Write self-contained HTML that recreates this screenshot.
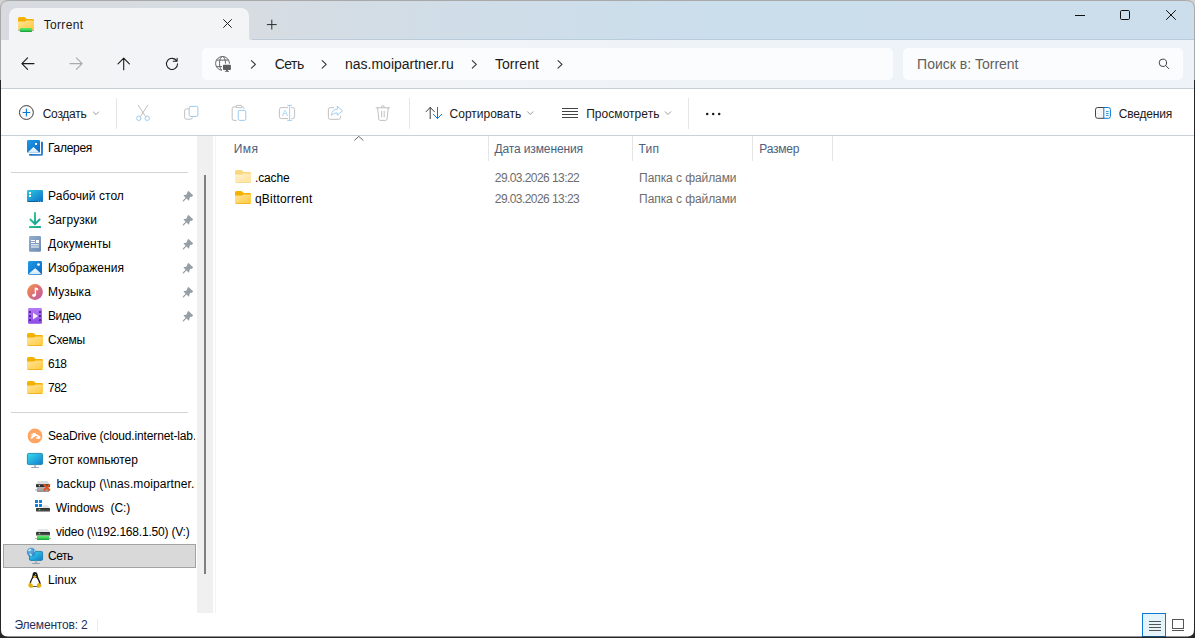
<!DOCTYPE html>
<html lang="ru"><head><meta charset="utf-8"><title>Torrent</title>
<style>
*{box-sizing:border-box;margin:0;padding:0}
html,body{width:1195px;height:638px;overflow:hidden;background:#fff}
body{font-family:"Liberation Sans","DejaVu Sans",sans-serif;font-size:12px;color:#1b1b1b;position:relative}
.a{position:absolute}
svg{position:absolute;overflow:visible}
.t{position:absolute;white-space:nowrap;line-height:16px;height:16px}
#win{position:absolute;left:0;top:0;width:1195px;height:638px;overflow:hidden;background:#fff}
#title{left:0;top:0;width:1195px;height:40px;background:linear-gradient(90deg,#d7dbdf 0%,#d6dce2 22%,#cfdde8 40%,#cbdeec 60%,#ccdeeb 100%)}
#titleline{left:252px;top:39px;width:943px;height:1px;background:rgba(110,145,175,.22)}
#nav{left:0;top:40px;width:1195px;height:48px;background:linear-gradient(90deg,#f3f4f6 0%,#f2f4f7 30%,#eef3f8 60%,#edf3f8 100%)}
#navline{left:0;top:88px;width:1195px;height:1px;background:#c6d0d9}
#tab{left:9px;top:8px;width:240px;height:33px;background:#f3f4f6;border-radius:8px 8px 0 0}
#addr{left:202px;top:48px;width:691px;height:32px;background:#fbfcfd;border-radius:5px}
#search{left:903px;top:48px;width:280px;height:32px;background:#fbfcfd;border-radius:5px}
#cmd{left:0;top:89px;width:1195px;height:46px;background:#fff}
#cmdline{left:0;top:135px;width:1195px;height:1px;background:#c9d0d8}
.vsep{position:absolute;width:1px;background:#e6e6e6}
#track{left:197px;top:136px;width:16px;height:477px;background:#f0f0f0}
#thumb{left:204px;top:175px;width:2px;height:399px;background:#7f7f7f}
.hsep{position:absolute;height:1px;background:#d4d4d4}
#sel{left:3px;top:544px;width:193px;height:24px;background:#d9d9d9;border:1px solid #a2a2a2}
.csep{position:absolute;top:136px;width:1px;height:25px;background:#e5e5e5}
#border{position:absolute;left:0;top:0;width:1195px;height:638px;pointer-events:none}
</style></head><body>
<div id="win">
<div id="title" class="a"></div>
<div id="titleline" class="a"></div>
<div id="nav" class="a"></div>
<div id="navline" class="a"></div>
<div id="tab" class="a"></div>
<div id="addr" class="a"></div>
<div id="search" class="a"></div>
<div id="cmd" class="a"></div>
<div id="cmdline" class="a"></div>
<div class="vsep" style="left:116px;top:98px;height:31px"></div>
<div class="vsep" style="left:409px;top:98px;height:31px"></div>
<div class="vsep" style="left:688px;top:98px;height:31px"></div>
<div id="track" class="a"></div>
<div id="thumb" class="a"></div>
<div class="vsep" style="left:215px;top:136px;height:477px;background:#f4f4f4"></div>
<div class="hsep" style="left:11px;top:172px;width:177px"></div>
<div class="hsep" style="left:11px;top:412px;width:177px"></div>
<div id="sel" class="a"></div>
<div class="csep" style="left:488px"></div>
<div class="csep" style="left:632px"></div>
<div class="csep" style="left:752px"></div>
<div class="csep" style="left:832px"></div>
<div class="vsep" style="left:97px;top:619px;height:12px;background:#ececec"></div>
<svg style="left:5.5px;top:36.5px" width="3.5" height="3.5" viewBox="0 0 3.5 3.5"><path d="M3.5 0V3.5H0Q3.5 3.5 3.5 0Z" fill="#f3f4f6"/></svg>
<svg style="left:249px;top:36.5px" width="3.5" height="3.5" viewBox="0 0 3.5 3.5"><path d="M0 0V3.5H3.5Q0 3.5 0 0Z" fill="#f3f4f6"/></svg>
<svg style="left:0;top:0" width="1195" height="638" viewBox="0 0 1195 638"><g transform="translate(18 17)" opacity="1"><path d="M0 1.5Q0 0 1.5 0H6Q6.9 0 7.5 .7L8.6 2.1H14.6Q16 2.1 16 3.5V8H0Z" fill="url(#fB)"/><path d="M0 4.4H6.4Q7.2 4.4 7.8 3.9L8.2 3.6H15Q16 3.6 16 4.6V11.6Q16 13 14.6 13H1.4Q0 13 0 11.6Z" fill="url(#fF)"/><path d="M.3 12.3Q.7 13 1.4 13H14.6Q15.3 13 15.7 12.3Z" fill="#eaa900" opacity=".8"/></g><rect x="18" y="30" width="16" height="1" fill="#9a9a9a" opacity=".7"/><rect x="20" y="28" width="12" height="3.9" rx=".6" fill="url(#grn)"/></svg>
<svg style="left:223px;top:19px" width="9" height="9" viewBox="0 0 9 9"><path d="M0.3 0.3L8.7 8.7M8.7 0.3L0.3 8.7" stroke="#222" stroke-width="1" fill="none"/></svg>
<svg style="left:0;top:0" width="300" height="40" viewBox="0 0 300 40"><path d="M271.8 19.7V29.5M266.9 24.6H276.7" stroke="#222" stroke-width="0.95" fill="none"/></svg>
<div class="a" style="left:1075px;top:15px;width:10px;height:1px;background:#111"></div>
<svg style="left:1120px;top:10px" width="10" height="10" viewBox="0 0 10 10"><rect x=".5" y=".5" width="9" height="9" rx="1.2" stroke="#111" stroke-width="1" fill="none"/></svg>
<svg style="left:1166px;top:10px" width="10" height="10" viewBox="0 0 10 10"><path d="M0.2 0.2L9.8 9.8M9.8 0.2L0.2 9.8" stroke="#111" stroke-width="1" fill="none"/></svg>
<svg style="left:0;top:0" width="1195" height="638" viewBox="0 0 1195 638"><path d="M34 63.6H22M27.6 57.9L21.9 63.6L27.6 69.3" stroke="#1a1a1a" stroke-width="1.1" fill="none" stroke-linecap="round" stroke-linejoin="round" /><path d="M70 63.6H82M76.4 57.9L82.1 63.6L76.4 69.3" stroke="#a9a9a9" stroke-width="1.1" fill="none" stroke-linecap="round" stroke-linejoin="round" /><path d="M123.7 69.8V58.4M118 63.9L123.7 58.2L129.4 63.9" stroke="#1a1a1a" stroke-width="1.1" fill="none" stroke-linecap="round" stroke-linejoin="round" /><path d="M177.55 63.80A5.55 5.55 0 1 1 176.76 61.04M173.3 61.2H177.1V58.2" stroke="#1a1a1a" stroke-width="1.05" fill="none" stroke-linecap="round" stroke-linejoin="round" /><clipPath id="gc"><path d="M210 50H240V80H210Z M221.9 63.7H232V73H221.9Z" clip-rule="evenodd"/></clipPath><g clip-path="url(#gc)" stroke="#666" stroke-width="1" fill="none"><circle cx="222.5" cy="63.4" r="6.9"/><ellipse cx="222.5" cy="63.4" rx="3" ry="6.9"/><path d="M216.4 60.1H228.6M216.4 66.6H228.6"/></g><path d="M223 65.5Q223 64.8 223.7 64.8H230.2Q230.9 64.8 230.9 65.5V69.2Q230.9 69.9 230.2 69.9H223.7Q223 69.9 223 69.2ZM226.2 69.9H227.7L228.2 70.9H229V71.7H224.9V70.9H225.7Z" fill="#5c5c5c"/><path d="M251.4 60.6L255.4 64.4L251.4 68.2" stroke="#333" stroke-width="1.1" fill="none" stroke-linecap="round" stroke-linejoin="round" /><path d="M322.2 60.6L326.2 64.4L322.2 68.2" stroke="#333" stroke-width="1.1" fill="none" stroke-linecap="round" stroke-linejoin="round" /><path d="M472.3 60.6L476.3 64.4L472.3 68.2" stroke="#333" stroke-width="1.1" fill="none" stroke-linecap="round" stroke-linejoin="round" /><path d="M558 60.6L562 64.4L558 68.2" stroke="#333" stroke-width="1.1" fill="none" stroke-linecap="round" stroke-linejoin="round" /><path d="M1166.6 62.8A3.7 3.7 0 1 1 1159.2 62.8A3.7 3.7 0 1 1 1166.6 62.8M1165.6 65.5L1168.8 68.7" stroke="#444" stroke-width="1.0" fill="none" stroke-linecap="round" stroke-linejoin="round" /></svg>
<svg style="left:0;top:0" width="1195" height="638" viewBox="0 0 1195 638"><circle cx="26.4" cy="112.5" r="6.95" fill="#fafafa" stroke="#3c3c3c" stroke-width="1"/><path d="M23 112.5H29.8M26.4 109.1V115.9" stroke="#0a78d4" stroke-width="1.1" fill="none" stroke-linecap="round" stroke-linejoin="round" /><path d="M93.4 112L96.0 114.6L98.6 112" stroke="#8a8a8a" stroke-width="0.9" fill="none" stroke-linecap="round" stroke-linejoin="round" /><path d="M527.6 111.8L530.25 114.5L532.9 111.8" stroke="#8a8a8a" stroke-width="0.9" fill="none" stroke-linecap="round" stroke-linejoin="round" /><path d="M665.2 111.8L667.9000000000001 114.5L670.6 111.8" stroke="#8a8a8a" stroke-width="0.9" fill="none" stroke-linecap="round" stroke-linejoin="round" /><path d="M138.3 105.3L145.5 116.4M147.7 105.3L140.5 116.4" stroke="#b9b9b9" stroke-width="0.9" fill="none" stroke-linecap="round" stroke-linejoin="round" /><circle cx="138.8" cy="118.3" r="2.2" fill="none" stroke="#9ccbf1" stroke-width="1"/><circle cx="147.2" cy="118.3" r="2.2" fill="none" stroke="#9ccbf1" stroke-width="1"/><path d="M188.4 108.9H186.6Q184.6 108.9 184.6 110.9V117.2Q184.6 119.2 186.6 119.2H190.6Q192.2 119.2 192.4 117.9" stroke="#b9b9b9" stroke-width="0.9" fill="none" stroke-linecap="round" stroke-linejoin="round" /><rect x="189.2" y="106.3" width="8.7" height="10.2" rx="1.8" fill="none" stroke="#9ccbf1" stroke-width="1"/><path d="M236.2 106.9H233.8Q232.2 106.9 232.2 108.5V118.8Q232.2 120.4 233.8 120.4H236.3M241.8 106.9H242.5Q244 106.9 244 108.4" stroke="#b9b9b9" stroke-width="0.9" fill="none" stroke-linecap="round" stroke-linejoin="round" /><rect x="236" y="105.4" width="6" height="2.2" rx="1.1" fill="none" stroke="#b9b9b9" stroke-width="0.9"/><rect x="238.2" y="110.3" width="7.6" height="10.1" rx="1.6" fill="none" stroke="#9ccbf1" stroke-width="1"/><path d="M287.6 107.6H281.4Q279.4 107.6 279.4 109.6V116.6Q279.4 118.6 281.4 118.6H287.6M291.6 107.6H292.6Q294.6 107.6 294.6 109.6V116.6Q294.6 118.6 292.6 118.6H291.6" stroke="#b9b9b9" stroke-width="0.9" fill="none" stroke-linecap="round" stroke-linejoin="round" /><path d="M289.6 105.4V120.4M287.6 105.4H291.6M287.6 120.4H291.6" stroke="#9ccbf1" stroke-width="0.9" fill="none" stroke-linecap="round" stroke-linejoin="round" /><text x="284.9" y="115.8" font-family="Liberation Sans,sans-serif" font-size="8.6" fill="#9ccbf1" text-anchor="middle">A</text><path d="M333.5 107.6H330.3Q328.4 107.6 328.4 109.5V117.4Q328.4 119.3 330.3 119.3H338.6Q340.5 119.3 340.5 117.4V116.2" stroke="#b9b9b9" stroke-width="0.9" fill="none" stroke-linecap="round" stroke-linejoin="round" /><path d="M337.3 106.4L342.5 110.8L337.3 115.3V112.9Q333.4 112.7 331.2 115.4Q332 109.4 337.3 108.9Z" stroke="#9ccbf1" stroke-width="0.9" fill="none" stroke-linecap="round" stroke-linejoin="round" /><path d="M376.2 107.8H389.6M381.4 107.6Q381.4 105.6 382.9 105.6Q384.4 105.6 384.4 107.6M377.6 108L378.8 119.2Q379 120.4 380.2 120.4H385.6Q386.8 120.4 387 119.2L388.2 108M381.6 111.2V117M384.2 111.2V117" stroke="#b9b9b9" stroke-width="0.9" fill="none" stroke-linecap="round" stroke-linejoin="round" /><path d="M430.2 118.6V107.5M426.2 111.6L430.2 107.4L434.3 111.6" stroke="#3a3a3a" stroke-width="1.0" fill="none" stroke-linecap="round" stroke-linejoin="round" /><path d="M437.5 107.4V118.5M433.4 114.3L437.5 118.6L441.6 114.3" stroke="#0a78d4" stroke-width="1.0" fill="none" stroke-linecap="round" stroke-linejoin="round" /><rect x="562" y="108.0" width="16" height="1" fill="#444"/><rect x="562" y="111.0" width="16" height="1" fill="#444"/><rect x="562" y="114.0" width="16" height="1" fill="#444"/><rect x="562" y="117.0" width="16" height="1" fill="#444"/><circle cx="707.2" cy="113.9" r="1.25" fill="#1a1a1a"/><circle cx="713.2" cy="113.9" r="1.25" fill="#1a1a1a"/><circle cx="719.2" cy="113.9" r="1.25" fill="#1a1a1a"/><path d="M1104.2 107.5H1097.6Q1095.5 107.5 1095.5 109.6V116.2Q1095.5 118.3 1097.6 118.3H1104.2" fill="#f6f6f6" stroke="#444" stroke-width="1"/><path d="M1104.2 107.5H1108.3Q1110.4 107.5 1110.4 109.6V116.2Q1110.4 118.3 1108.3 118.3H1104.2Z" stroke="#0a78d4" stroke-width="1.0" fill="none" stroke-linecap="round" stroke-linejoin="round" /><path d="M1106 111.4H1108.6M1106 113.4H1108.6M1106 115.4H1108.6" stroke="#0a78d4" stroke-width=".85" fill="none"/></svg>
<svg style="left:0;top:0" width="1195" height="638" viewBox="0 0 1195 638"><defs>
<linearGradient id="fB" x1="0" y1="0" x2="0" y2="1"><stop offset="0" stop-color="#f7b500"/><stop offset="1" stop-color="#eea700"/></linearGradient>
<linearGradient id="fF" x1="0" y1="0" x2="1" y2="1"><stop offset="0" stop-color="#ffe59a"/><stop offset="1" stop-color="#ffc73a"/></linearGradient>
<linearGradient id="blu" x1="0" y1="0" x2="1" y2="1"><stop offset="0" stop-color="#1f9be6"/><stop offset="1" stop-color="#0a68c4"/></linearGradient>
<linearGradient id="blu2" x1="0" y1="0" x2="1" y2="1"><stop offset="0" stop-color="#0a5cbe"/><stop offset="1" stop-color="#3f8ad6"/></linearGradient>
<linearGradient id="mtn" x1="0" y1="0" x2="0" y2="1"><stop offset="0" stop-color="#ffffff"/><stop offset="1" stop-color="#cfe6fa"/></linearGradient>
<linearGradient id="dsk" x1="0" y1="0" x2="1" y2="1"><stop offset="0" stop-color="#30c8de"/><stop offset="1" stop-color="#0a6ecb"/></linearGradient>
<linearGradient id="mon" x1="0" y1="0" x2="1" y2="1"><stop offset="0" stop-color="#3adcea"/><stop offset="1" stop-color="#107cd0"/></linearGradient>
<linearGradient id="dl" x1="0" y1="0" x2="1" y2="1"><stop offset="0" stop-color="#30d07a"/><stop offset="1" stop-color="#1298a4"/></linearGradient>
<linearGradient id="doc" x1="0" y1="0" x2="1" y2="1"><stop offset="0" stop-color="#93aecd"/><stop offset="1" stop-color="#6b8db4"/></linearGradient>
<linearGradient id="mus" x1="0" y1="0" x2="1" y2="1"><stop offset="0" stop-color="#f6934a"/><stop offset=".55" stop-color="#dc6c78"/><stop offset="1" stop-color="#b458b8"/></linearGradient>
<linearGradient id="vid" x1="0" y1="0" x2="0" y2="1"><stop offset="0" stop-color="#b77af4"/><stop offset="1" stop-color="#8c4ae6"/></linearGradient>
<linearGradient id="grn" x1="0" y1="0" x2="0" y2="1"><stop offset="0" stop-color="#62ec70"/><stop offset=".55" stop-color="#3fd255"/><stop offset="1" stop-color="#14963a"/></linearGradient>
<linearGradient id="drv" x1="0" y1="0" x2="0" y2="1"><stop offset="0" stop-color="#2a2a2a"/><stop offset=".7" stop-color="#4a4a4a"/><stop offset="1" stop-color="#8a8a8a"/></linearGradient>
<radialGradient id="glb" cx=".4" cy=".35" r=".7"><stop offset="0" stop-color="#6ab8e8"/><stop offset="1" stop-color="#2a7fc0"/></radialGradient>
</defs><path d="M41 141.8H42Q43 141.8 43 142.8V154.2Q43 155.7 41.5 155.7H30Q29 155.7 29 154.7V154H41Z" fill="url(#blu2)"/><rect x="27" y="140" width="13" height="12.8" rx="1.2" fill="url(#blu)"/><rect x="35" y="143" width="2" height="2" fill="#fff"/><path d="M33.5 147L39.4 152.5Q39.2 152.8 38.8 152.8H28.2Q27.8 152.8 27.6 152.5Z" fill="url(#mtn)"/><rect x="27" y="190" width="16" height="12" rx="1.3" fill="url(#dsk)"/><path d="M27.3 201.2H42.7Q42.5 202 41.7 202H28.3Q27.5 202 27.3 201.2Z" fill="#0b4f8c"/><rect x="29" y="192" width="2" height="2" fill="#fff"/><rect x="29" y="195" width="2" height="2" fill="#fff"/><rect x="38" y="201.2" width="1" height=".8" fill="#7fc4ee"/><rect x="40" y="201.2" width="1" height=".8" fill="#7fc4ee"/><path d="M35 213V224.2M30.4 219.5L35 224.2L39.6 219.5" stroke="url(#dl)" stroke-width="1.9" fill="none" stroke-linecap="round" stroke-linejoin="round"/><rect x="29" y="226" width="12" height="1.9" rx=".4" fill="url(#dl)"/><rect x="29" y="236" width="12" height="15.8" rx="1.2" fill="url(#doc)"/><rect x="31" y="240" width="4" height="1" fill="#fff"/><rect x="31" y="242" width="4" height="1" fill="#fff"/><rect x="36" y="240" width="3" height="3" fill="#fff"/><rect x="31" y="244.3" width="8" height="1" fill="#fff"/><rect x="31" y="246.5" width="8" height="1" fill="#fff"/><rect x="28" y="261" width="14" height="13.8" rx="1.4" fill="url(#blu)"/><circle cx="38.5" cy="264.6" r="1.35" fill="#fff"/><path d="M35.2 268.3L41 273.6Q40.8 273.9 40.4 273.9H29.6Q29.2 273.9 29 273.6Z" fill="url(#mtn)"/><circle cx="35" cy="292" r="7.9" fill="url(#mus)"/><ellipse cx="33.9" cy="295.3" rx="1.8" ry="1.6" fill="#fff"/><path d="M34.7 295.3V287.6Q35.6 287.2 37.6 288.2Q38.3 288.6 38.2 289.4V290.8Q37 289.8 36.1 289.8V295.3Z" fill="#fff"/><rect x="28" y="308" width="14" height="15.8" rx="1.4" fill="url(#vid)"/><rect x="29.1" y="311.1" width="1.9" height="1.9" rx=".3" fill="#47297e"/><rect x="39" y="311.1" width="1.9" height="1.9" rx=".3" fill="#47297e"/><rect x="29.1" y="315.1" width="1.9" height="1.9" rx=".3" fill="#47297e"/><rect x="39" y="315.1" width="1.9" height="1.9" rx=".3" fill="#47297e"/><rect x="29.1" y="319.1" width="1.9" height="1.9" rx=".3" fill="#47297e"/><rect x="39" y="319.1" width="1.9" height="1.9" rx=".3" fill="#47297e"/><path d="M33 312.8L38.2 316L33 319.4Z" fill="#f4f0fa"/><g transform="translate(27 333)" opacity="1"><path d="M0 1.5Q0 0 1.5 0H6Q6.9 0 7.5 .7L8.6 2.1H14.6Q16 2.1 16 3.5V8H0Z" fill="url(#fB)"/><path d="M0 4.4H6.4Q7.2 4.4 7.8 3.9L8.2 3.6H15Q16 3.6 16 4.6V11.6Q16 13 14.6 13H1.4Q0 13 0 11.6Z" fill="url(#fF)"/><path d="M.3 12.3Q.7 13 1.4 13H14.6Q15.3 13 15.7 12.3Z" fill="#eaa900" opacity=".8"/></g><g transform="translate(27 357)" opacity="1"><path d="M0 1.5Q0 0 1.5 0H6Q6.9 0 7.5 .7L8.6 2.1H14.6Q16 2.1 16 3.5V8H0Z" fill="url(#fB)"/><path d="M0 4.4H6.4Q7.2 4.4 7.8 3.9L8.2 3.6H15Q16 3.6 16 4.6V11.6Q16 13 14.6 13H1.4Q0 13 0 11.6Z" fill="url(#fF)"/><path d="M.3 12.3Q.7 13 1.4 13H14.6Q15.3 13 15.7 12.3Z" fill="#eaa900" opacity=".8"/></g><g transform="translate(27 381)" opacity="1"><path d="M0 1.5Q0 0 1.5 0H6Q6.9 0 7.5 .7L8.6 2.1H14.6Q16 2.1 16 3.5V8H0Z" fill="url(#fB)"/><path d="M0 4.4H6.4Q7.2 4.4 7.8 3.9L8.2 3.6H15Q16 3.6 16 4.6V11.6Q16 13 14.6 13H1.4Q0 13 0 11.6Z" fill="url(#fF)"/><path d="M.3 12.3Q.7 13 1.4 13H14.6Q15.3 13 15.7 12.3Z" fill="#eaa900" opacity=".8"/></g><circle cx="35" cy="435.9" r="7.4" fill="#ffa563"/><path d="M30.2 435.2Q31.2 434.3 32.4 434.2Q33.2 432.6 34.6 432.9Q36 433.2 36.6 434.4Q38.4 434.3 39.4 436Q40.6 436.4 40.5 437.6Q40.4 438.8 39.2 438.8H36.3Q35.6 438.2 36.2 437.4Q36.9 436.6 37.8 437.2Q37.4 435.8 36.2 435.9Q35 436 33.6 437.6Q32.6 438.8 31.4 438.7Q30.4 438.5 30.6 437.5Q31.4 436.4 32.6 435.6Q31.4 435 30.2 435.2Z" fill="#fff"/><rect x="27.4" y="453.4" width="15.2" height="11.2" rx="1.3" fill="url(#mon)" stroke="#0c7aa4" stroke-width=".8"/><rect x="34.2" y="464.8" width="1.6" height="2.4" fill="#a3afbb"/><rect x="31" y="467" width="8" height="1" rx=".4" fill="#9aa6b4"/><path d="M38.2 481H47.6L50 484.4H36Z" fill="#dcdcdc"/><rect x="36" y="484.2" width="14" height="3" fill="#2f2f2f"/><rect x="38.8" y="485.1" width="1.2" height="1.2" fill="#ddd"/><rect x="37" y="487.2" width="12" height="3.4" fill="#a9a9a9"/><rect x="35" y="489.4" width="2.4" height="1.2" fill="#b5b5b5"/><rect x="37" y="490.6" width="12" height="1" fill="#555"/><path d="M44.3 485L49.3 490M49.3 485L44.3 490" stroke="#e8521c" stroke-width="2.1" stroke-linecap="round"/><rect x="35" y="500" width="3" height="3" rx=".3" fill="#0b82e0"/><rect x="35" y="504" width="3" height="3" rx=".3" fill="#0b82e0"/><rect x="39" y="500" width="3" height="3" rx=".3" fill="#0b82e0"/><rect x="39" y="504" width="3" height="3" rx=".3" fill="#0b82e0"/><path d="M42.6 505.2H47.8L50 508.2H42.6Z" fill="#e2e3e5"/><rect x="36" y="508" width="14" height="3.7" rx=".4" fill="url(#drv)"/><circle cx="39.5" cy="509.5" r=".85" fill="#3cf04a"/><path d="M38.4 529H47.6L50 532.2H36Z" fill="#e4e6e8"/><rect x="36" y="532" width="14" height="3.7" rx=".4" fill="url(#drv)"/><circle cx="39.5" cy="533.5" r=".85" fill="#3cf04a"/><rect x="35" y="538" width="16" height="1" fill="#b0b0b0"/><rect x="37" y="535.8" width="12.2" height="4.2" rx=".5" fill="url(#grn)"/><path d="M34.8 571.9Q37.4 571.9 37.7 575Q37.8 577 39.2 579.4Q40.9 582 40.7 584.6L37 587H33L29.5 584.6Q29.3 582 31 579.4Q32.4 577 32.5 575Q32.7 571.9 34.8 571.9Z" fill="#161616"/><path d="M34.8 577.3Q36.7 577.3 37.7 579.6Q39.4 582.6 39.3 585.6L37.4 586.3H33L30.8 585.6Q30.6 582.6 32.2 579.6Q33.1 577.3 34.8 577.3Z" fill="#fff"/><path d="M33.1 576.2Q34.8 574.9 36.5 576.2Q35.7 577.9 34.7 577.9Q33.8 577.8 33.1 576.2Z" fill="#f0b40e"/><circle cx="35.6" cy="574.6" r=".5" fill="#ddd"/><path d="M28.4 584.3Q29 582.7 30.5 582.8Q32 583.4 33 585.3Q33.8 587 32.6 587.6Q31 588.1 29.3 587.2Q27.7 586.4 28.4 584.3Z" fill="#e6b012"/><path d="M37 584.4Q37.3 582.8 38.9 582.9Q40.4 583.3 41.3 584.9Q42.1 586.2 40.7 586.9Q39.1 587.9 37.7 587.8Q36.7 587.4 36.8 586Z" fill="#e6b012"/><g transform="translate(0 0)"><path d="M188.5 191L193.1 195.3L192.3 196.4L189.9 197.3L188.9 200.7L183.3 195.4L186.8 194.3L187.5 191.8Z" fill="#96a0a8"/><path d="M186.3 197.9L183.3 200.9" stroke="#96a0a8" stroke-width="1.3" stroke-linecap="round"/></g><g transform="translate(0 24)"><path d="M188.5 191L193.1 195.3L192.3 196.4L189.9 197.3L188.9 200.7L183.3 195.4L186.8 194.3L187.5 191.8Z" fill="#96a0a8"/><path d="M186.3 197.9L183.3 200.9" stroke="#96a0a8" stroke-width="1.3" stroke-linecap="round"/></g><g transform="translate(0 48)"><path d="M188.5 191L193.1 195.3L192.3 196.4L189.9 197.3L188.9 200.7L183.3 195.4L186.8 194.3L187.5 191.8Z" fill="#96a0a8"/><path d="M186.3 197.9L183.3 200.9" stroke="#96a0a8" stroke-width="1.3" stroke-linecap="round"/></g><g transform="translate(0 72)"><path d="M188.5 191L193.1 195.3L192.3 196.4L189.9 197.3L188.9 200.7L183.3 195.4L186.8 194.3L187.5 191.8Z" fill="#96a0a8"/><path d="M186.3 197.9L183.3 200.9" stroke="#96a0a8" stroke-width="1.3" stroke-linecap="round"/></g><g transform="translate(0 96)"><path d="M188.5 191L193.1 195.3L192.3 196.4L189.9 197.3L188.9 200.7L183.3 195.4L186.8 194.3L187.5 191.8Z" fill="#96a0a8"/><path d="M186.3 197.9L183.3 200.9" stroke="#96a0a8" stroke-width="1.3" stroke-linecap="round"/></g><g transform="translate(0 120)"><path d="M188.5 191L193.1 195.3L192.3 196.4L189.9 197.3L188.9 200.7L183.3 195.4L186.8 194.3L187.5 191.8Z" fill="#96a0a8"/><path d="M186.3 197.9L183.3 200.9" stroke="#96a0a8" stroke-width="1.3" stroke-linecap="round"/></g><rect x="29.4" y="551.4" width="13.2" height="9.0" rx="1.3" fill="url(#mon)" stroke="#0c7aa4" stroke-width=".8"/><rect x="35.2" y="560.7" width="1.6" height="2.4" fill="#a3afbb"/><rect x="32" y="563" width="8" height="1" rx=".4" fill="#8fa0b0"/><circle cx="31.2" cy="552.1" r="4.4" fill="url(#glb)"/><path d="M28.2 550.4Q29.6 548.8 31.4 549.2Q30.6 550.6 28.8 551.2ZM29 553.6Q30.4 553.2 31.6 554.4Q32.4 555.4 31.4 556Q29.6 555.4 29 553.6ZM34 549.6Q35.4 551 35.2 552.6Q34.2 552 34 549.6Z" fill="#e4f2fb"/></svg>
<svg style="left:0;top:0" width="1195" height="638" viewBox="0 0 1195 638"><g transform="translate(235 170)" opacity="0.5"><path d="M0 1.5Q0 0 1.5 0H6Q6.9 0 7.5 .7L8.6 2.1H14.6Q16 2.1 16 3.5V8H0Z" fill="url(#fB)"/><path d="M0 4.4H6.4Q7.2 4.4 7.8 3.9L8.2 3.6H15Q16 3.6 16 4.6V11.6Q16 13 14.6 13H1.4Q0 13 0 11.6Z" fill="url(#fF)"/><path d="M.3 12.3Q.7 13 1.4 13H14.6Q15.3 13 15.7 12.3Z" fill="#eaa900" opacity=".8"/></g><g transform="translate(235 191)" opacity="1"><path d="M0 1.5Q0 0 1.5 0H6Q6.9 0 7.5 .7L8.6 2.1H14.6Q16 2.1 16 3.5V8H0Z" fill="url(#fB)"/><path d="M0 4.4H6.4Q7.2 4.4 7.8 3.9L8.2 3.6H15Q16 3.6 16 4.6V11.6Q16 13 14.6 13H1.4Q0 13 0 11.6Z" fill="url(#fF)"/><path d="M.3 12.3Q.7 13 1.4 13H14.6Q15.3 13 15.7 12.3Z" fill="#eaa900" opacity=".8"/></g><path d="M354.6 140.2L358.8 136.4L363 140.2" stroke="#555" stroke-width="0.9" fill="none" stroke-linecap="round" stroke-linejoin="round" /></svg>
<svg style="left:0;top:0" width="1195" height="638" viewBox="0 0 1195 638"><rect x="1142.5" y="613.5" width="23" height="23" fill="#e5f3fb" stroke="#0a78d4" stroke-width="1"/><rect x="1149" y="621.0" width="12" height="1" fill="#555"/><rect x="1149" y="624.0" width="12" height="1" fill="#555"/><rect x="1149" y="627.0" width="12" height="1" fill="#555"/><rect x="1149" y="630.0" width="12" height="1" fill="#555"/><rect x="1172.5" y="619.5" width="11" height="9" fill="none" stroke="#555" stroke-width="1"/><rect x="1172" y="630" width="12" height="1" fill="#555"/></svg>
<div class="t" style="left:43.70px;top:16.84px;font-size:12px;color:#1a1a1a;letter-spacing:0.334px">Torrent</div>
<div class="t" style="left:274.80px;top:56.15px;font-size:14px;color:#1a1a1a;letter-spacing:-0.560px">Сеть</div>
<div class="t" style="left:345.10px;top:56.15px;font-size:14px;color:#1a1a1a;letter-spacing:-0.021px">nas.moipartner.ru</div>
<div class="t" style="left:494.90px;top:56.15px;font-size:14px;color:#1a1a1a;letter-spacing:0.089px">Torrent</div>
<div class="t" style="left:917.10px;top:56.15px;font-size:14px;color:#5f5f5f;letter-spacing:-0.005px">Поиск в: Torrent</div>
<div class="t" style="left:42.70px;top:105.84px;font-size:12px;color:#1a1a1a;letter-spacing:-0.258px">Создать</div>
<div class="t" style="left:449.60px;top:105.84px;font-size:12px;color:#1a1a1a;letter-spacing:-0.009px">Сортировать</div>
<div class="t" style="left:586.20px;top:105.84px;font-size:12px;color:#1a1a1a;letter-spacing:0.043px">Просмотреть</div>
<div class="t" style="left:1118.70px;top:105.84px;font-size:12px;color:#1a1a1a;letter-spacing:-0.166px">Сведения</div>
<div class="t" style="left:48.00px;top:139.84px;font-size:12px;color:#000;letter-spacing:-0.276px">Галерея</div>
<div class="t" style="left:48.00px;top:187.84px;font-size:12px;color:#000;letter-spacing:0.048px">Рабочий стол</div>
<div class="t" style="left:48.00px;top:211.84px;font-size:12px;color:#000;letter-spacing:0.088px">Загрузки</div>
<div class="t" style="left:48.00px;top:235.84px;font-size:12px;color:#000;letter-spacing:0.138px">Документы</div>
<div class="t" style="left:48.00px;top:259.84px;font-size:12px;color:#000;letter-spacing:0.062px">Изображения</div>
<div class="t" style="left:48.00px;top:283.84px;font-size:12px;color:#000;letter-spacing:0.091px">Музыка</div>
<div class="t" style="left:48.00px;top:307.84px;font-size:12px;color:#000;letter-spacing:-0.412px">Видео</div>
<div class="t" style="left:48.00px;top:331.84px;font-size:12px;color:#000;letter-spacing:-0.219px">Схемы</div>
<div class="t" style="left:48.00px;top:355.84px;font-size:12px;color:#000;letter-spacing:-0.510px">618</div>
<div class="t" style="left:48.00px;top:379.84px;font-size:12px;color:#000;letter-spacing:-0.510px">782</div>
<div class="t" style="left:48.00px;top:427.84px;font-size:12px;color:#000;letter-spacing:-0.137px;width:147.0px;overflow:hidden">SeaDrive (cloud.internet-lab.ru)</div>
<div class="t" style="left:48.00px;top:451.84px;font-size:12px;color:#000;letter-spacing:0.019px">Этот компьютер</div>
<div class="t" style="left:56.50px;top:475.84px;font-size:12px;color:#000;letter-spacing:0.103px;width:138.5px;overflow:hidden">backup (\\nas.moipartner.ru) (B:)</div>
<div class="t" style="left:55.80px;top:499.84px;font-size:12px;color:#000;letter-spacing:-0.065px">Windows  (C:)</div>
<div class="t" style="left:56.00px;top:523.84px;font-size:12px;color:#000;letter-spacing:-0.203px">video (\\192.168.1.50) (V:)</div>
<div class="t" style="left:48.00px;top:547.84px;font-size:12px;color:#000;letter-spacing:-0.501px">Сеть</div>
<div class="t" style="left:48.00px;top:571.84px;font-size:12px;color:#000;letter-spacing:-0.037px">Linux</div>
<div class="t" style="left:233.80px;top:140.84px;font-size:12px;color:#4c607a;letter-spacing:0.408px">Имя</div>
<div class="t" style="left:494.50px;top:140.84px;font-size:12px;color:#4c607a;letter-spacing:-0.127px">Дата изменения</div>
<div class="t" style="left:638.50px;top:140.84px;font-size:12px;color:#4c607a;letter-spacing:0.228px">Тип</div>
<div class="t" style="left:759.30px;top:140.84px;font-size:12px;color:#4c607a;letter-spacing:-0.242px">Размер</div>
<div class="t" style="left:255.00px;top:169.84px;font-size:12px;color:#000;letter-spacing:-0.143px">.cache</div>
<div class="t" style="left:255.00px;top:190.84px;font-size:12px;color:#000;letter-spacing:0.195px">qBittorrent</div>
<div class="t" style="left:494.80px;top:169.84px;font-size:12px;color:#6d6d6d;letter-spacing:-0.570px">29.03.2026 13:22</div>
<div class="t" style="left:494.80px;top:190.84px;font-size:12px;color:#6d6d6d;letter-spacing:-0.570px">29.03.2026 13:23</div>
<div class="t" style="left:639.10px;top:169.84px;font-size:12px;color:#6d6d6d;letter-spacing:-0.075px">Папка с файлами</div>
<div class="t" style="left:639.10px;top:190.84px;font-size:12px;color:#6d6d6d;letter-spacing:-0.075px">Папка с файлами</div>
<div class="t" style="left:14.50px;top:616.84px;font-size:12px;color:#1e3058;letter-spacing:-0.185px">Элементов: 2</div>
</div>
<svg style="left:0;top:0" width="1195" height="638" viewBox="0 0 1195 638"><path d="M0 80V0H1195V80H1194V8.5Q1194 1 1186.5 1H8.5Q1 1 1 8.5V80Z" fill="#d3d3d3"/><path d="M0.5 80V8.5Q0.5 0.5 8.5 0.5H1186.5Q1194.5 0.5 1194.5 8.5V80" fill="none" stroke="#a9a9a9" stroke-width="1"/><path d="M0 80H1V630Q1 636.4 7.5 636.4H1187.5Q1194 636.4 1194 630V80H1195V638H0Z" fill="#262626"/></svg>
</body></html>
